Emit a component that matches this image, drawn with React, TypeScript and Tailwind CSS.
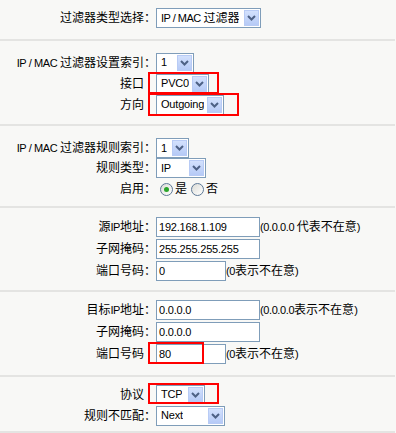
import React from "react"

const base = "font-['Liberation_Sans','Noto_Sans_CJK_SC',sans-serif] text-black"

function Chevron() {
  return (
    <svg width="9" height="6" viewBox="0 0 9 6">
      <polyline points="1,1 4.5,4.5 8,1" fill="none" stroke="#4d6185" strokeWidth="2" />
    </svg>
  )
}

function Select({ value, w, h = "h-[20px]" }: { value: React.ReactNode; w: string; h?: string }) {
  return (
    <div className={`${w} ${h} flex items-center justify-between border border-[#7f9db9] bg-white p-px`}>
      <span className="min-w-0 overflow-hidden pl-[3px] text-[11px] leading-[13px] tracking-[-0.2px] whitespace-nowrap">{value}</span>
      <div className="flex h-full w-[15px] shrink-0 items-center justify-center border border-[#b8cbf5] bg-gradient-to-b from-[#d3e1fd] to-[#b6caf6]">
        <Chevron />
      </div>
    </div>
  )
}

function Input({ value, w }: { value: string; w: string }) {
  return (
    <div className={`${w} h-[20px] flex items-center border border-[#7f9db9] bg-white pl-[2px]`}>
      <span className="text-[11px] leading-[13px] tracking-[-0.2px]">{value}</span>
    </div>
  )
}

function Row({ label, h, children }: { label: React.ReactNode; h: string; children: React.ReactNode }) {
  return (
    <div className={`flex items-center ${h}`}>
      <div className="w-[156px] shrink-0 text-right text-[12px] leading-[14px] whitespace-nowrap">{label}</div>
      <div className="flex items-center">{children}</div>
    </div>
  )
}

function RedBox({ cls }: { cls: string }) {
  return <div className={`pointer-events-none absolute border-2 border-[#ff0000] ${cls}`} />
}

function Radio({ on }: { on?: boolean }) {
  return (
    <div className="flex h-[13px] w-[13px] items-center justify-center rounded-full border border-[#5d7896] bg-gradient-to-br from-[#dcdcd6] to-white">
      {on && <div className="h-[5px] w-[5px] rounded-full bg-[#2aa52a]" />}
    </div>
  )
}

function Line() {
  return <div className="h-[2px] w-[395px] bg-[#e4e4e2]" />
}

const Latin = ({ children }: { children: React.ReactNode }) => <span className="text-[11px] tracking-[-0.4px]">{children}</span>

export default function App() {
  return (
    <div className={`${base} h-[433px] w-[396px] overflow-hidden bg-[#f8f8f6]`}>
      <div className="h-[39px] pt-[8px]">
        <Row label="过滤器类型选择：" h="h-[20px]">
          <Select w="w-[105px]" value={<><span className="tracking-[-0.5px]">IP / MAC </span><span className="text-[12px] tracking-normal">过滤器</span></>} />
        </Row>
      </div>
      <Line />

      <div className="h-[83px] pt-[11px]">
        <Row label={<><Latin>IP / MAC </Latin>过滤器设置索引：</>} h="h-[21px]">
          <Select w="w-[38px]" value="1" />
        </Row>
        <Row label={<span className="pr-[12px]">接口</span>} h="h-[21px]">
          <div className="relative">
            <Select w="w-[53px]" value="PVC0" />
            <RedBox cls="left-[-8px] top-[-2px] h-[22px] w-[71px]" />
          </div>
        </Row>
        <Row label={<span className="pr-[12px]">方向</span>} h="h-[21px]">
          <div className="relative">
            <Select w="w-[68px]" value="Outgoing" />
            <RedBox cls="left-[-8px] top-[-2px] h-[23px] w-[91px]" />
          </div>
        </Row>
      </div>
      <Line />

      <div className="h-[80px] pt-[12px]">
        <Row label={<><Latin>IP / MAC </Latin>过滤器规则索引：</>} h="h-[20px]">
          <Select w="w-[33px]" value="1" />
        </Row>
        <Row label="规则类型：" h="h-[20px]">
          <Select w="w-[50px]" value="IP" />
        </Row>
        <Row label="启用：" h="h-[22px]">
          <div className="ml-[4px] flex items-center text-[12px] leading-[14px]">
            <Radio on />
            <span className="ml-[2px]">是</span>
            <div className="ml-[4px]">
              <Radio />
            </div>
            <span className="ml-[2px]">否</span>
          </div>
        </Row>
      </div>
      <Line />

      <div className="h-[82px] pt-[8px]">
        <Row label={<>源<Latin>IP</Latin>地址：</>} h="h-[22px]">
          <Input w="w-[104px]" value="192.168.1.109" />
          <span className="text-[12px] leading-[14px] whitespace-nowrap"><Latin>(0.0.0.0 </Latin>代表不在意<Latin>)</Latin></span>
        </Row>
        <Row label="子网掩码：" h="h-[22px]">
          <Input w="w-[104px]" value="255.255.255.255" />
        </Row>
        <Row label="端口号码：" h="h-[22px]">
          <Input w="w-[70px]" value="0" />
          <span className="text-[12px] leading-[14px] whitespace-nowrap"><Latin>(0</Latin>表示不在意<Latin>)</Latin></span>
        </Row>
      </div>
      <Line />

      <div className="h-[83px] pt-[7px]">
        <Row label={<>目标<Latin>IP</Latin>地址：</>} h="h-[22px]">
          <Input w="w-[104px]" value="0.0.0.0" />
          <span className="text-[12px] leading-[14px] whitespace-nowrap"><Latin>(0.0.0.0</Latin>表示不在意<Latin>)</Latin></span>
        </Row>
        <Row label="子网掩码：" h="h-[22px]">
          <Input w="w-[104px]" value="0.0.0.0" />
        </Row>
        <Row label={<span className="pr-[12px]">端口号码</span>} h="h-[22px]">
          <div className="relative">
            <Input w="w-[70px]" value="80" />
            <RedBox cls="left-[-8px] top-[-2px] h-[22px] w-[56px]" />
          </div>
          <span className="text-[12px] leading-[14px] whitespace-nowrap"><Latin>(0</Latin>表示不在意<Latin>)</Latin></span>
        </Row>
      </div>
      <Line />

      <div className="h-[54px] pt-[7px]">
        <Row label={<span className="pr-[12px]">协议</span>} h="h-[21px]">
          <div className="relative">
            <Select w="w-[49px]" h="h-[19px]" value="TCP" />
            <RedBox cls="left-[-8px] top-[-2px] h-[21px] w-[71px]" />
          </div>
        </Row>
        <Row label="规则不匹配：" h="h-[21px]">
          <Select w="w-[69px]" value="Next" />
        </Row>
      </div>
      <Line />
    </div>
  )
}
